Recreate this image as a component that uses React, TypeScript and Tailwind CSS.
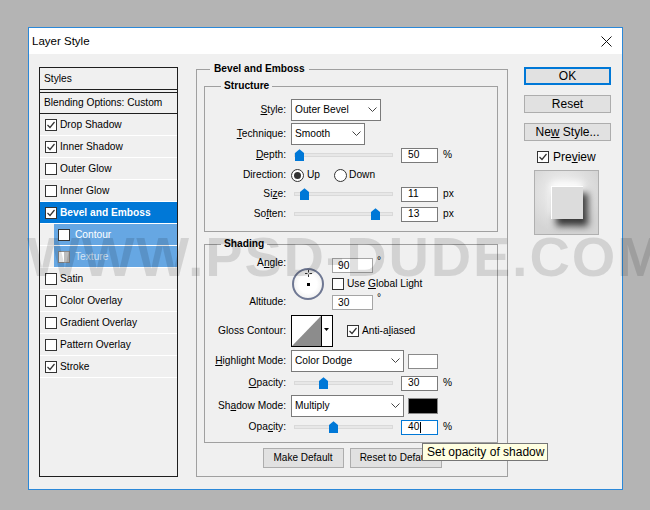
import React from "react";

type Row = { label: string; checked?: boolean; kind?: "sel" | "sub" | "dim" };

const rows: Row[] = [
  { label: "Drop Shadow", checked: true },
  { label: "Inner Shadow", checked: true },
  { label: "Outer Glow" },
  { label: "Inner Glow" },
  { label: "Bevel and Emboss", checked: true, kind: "sel" },
  { label: "Contour", kind: "sub" },
  { label: "Texture", kind: "dim" },
  { label: "Satin" },
  { label: "Color Overlay" },
  { label: "Gradient Overlay" },
  { label: "Pattern Overlay" },
  { label: "Stroke", checked: true },
];

const U = ({ children }: { children: React.ReactNode }) => (
  <span className="underline underline-offset-[1px]">{children}</span>
);

const Box = ({ checked, dim }: { checked?: boolean; dim?: boolean }) => (
  <span
    className={`flex h-[12px] w-[12px] shrink-0 items-center justify-center border ${
      dim ? "border-[#8a8a8a] bg-[linear-gradient(90deg,#ffffff_50%,#bdbdbd_50%)]" : "border-[#333] bg-white"
    }`}
  >
    {checked && (
      <svg width="10" height="10" viewBox="0 0 10 10">
        <path d="M1.5 5 L4 7.5 L8.5 2" fill="none" stroke="#333" strokeWidth="1.2" />
      </svg>
    )}
  </span>
);

const Label = ({ children }: { children: React.ReactNode }) => (
  <span className="w-[81px] shrink-0 text-right">{children}</span>
);

const Chevron = () => (
  <svg width="9" height="6" viewBox="0 0 9 6">
    <path d="M0.5 0.5 L4.5 4.5 L8.5 0.5" fill="none" stroke="#444" />
  </svg>
);

const Select = ({ value, w }: { value: string; w: string }) => (
  <div className={`ml-[5px] flex h-[22px] items-center justify-between border border-[#7a7a7a] bg-white pl-[3px] pr-[3px] ${w}`}>
    <span>{value}</span>
    <Chevron />
  </div>
);

const Slider = ({ pos }: { pos: number }) => (
  <div className="relative ml-[8px] h-[14px] w-[99px] shrink-0">
    <div className="absolute left-0 right-0 top-[5px] h-[4px] border border-[#d9d9d9] bg-[#e7e7e7]" />
    <svg className="absolute top-[1px]" style={{ left: pos - 4 }} width="9" height="12" viewBox="0 0 9 12">
      <path d="M0 4 L4.5 0.3 L9 4 V12 H0 Z" fill="#0078d7" />
    </svg>
  </div>
);

const Num = ({ v, focus }: { v: string; focus?: boolean }) => (
  <div
    className={`ml-[8px] flex h-[15px] w-[37px] shrink-0 items-center border bg-white pl-[6px] ${
      focus ? "border-[#0078d7]" : "border-[#7a7a7a]"
    }`}
  >
    {v}
    {focus && <span className="ml-[1px] h-[11px] w-px bg-black" />}
  </div>
);

const Radio = ({ on }: { on?: boolean }) => (
  <span className="flex h-[13px] w-[13px] shrink-0 items-center justify-center rounded-full border border-[#333] bg-white">
    {on && <span className="h-[7px] w-[7px] rounded-full bg-[#333]" />}
  </span>
);

const Btn = ({ children, w, ok }: { children: React.ReactNode; w?: string; ok?: boolean }) => (
  <div
    className={`flex h-[18px] items-center justify-center bg-[#e1e1e1] ${w ?? ""} ${
      ok ? "border-2 border-[#0078d7]" : "border border-[#adadad]"
    }`}
  >
    {children}
  </div>
);

export default function App() {
  return (
    <div className="relative h-[510px] w-[650px] overflow-hidden bg-[#b4b4b4] pl-[28px] pt-[27px] font-['Liberation_Sans',Arial,sans-serif] text-[10.2px] leading-[14px] text-black">
      <div className="flex h-[463px] w-[595px] flex-col border border-[#2b88d8] bg-[#f0f0f0]">
        {/* title bar */}
        <div className="flex h-[26px] shrink-0 items-center justify-between bg-white pl-[3px] pr-[10px]">
          <span className="text-[11.5px]">Layer Style</span>
          <svg width="11" height="11" viewBox="0 0 11 11">
            <path d="M0.5 0.5 L10.5 10.5 M10.5 0.5 L0.5 10.5" stroke="#111" strokeWidth="1" />
          </svg>
        </div>

        <div className="flex flex-1 items-start">
          {/* styles list */}
          <div className="ml-[10px] mt-[13px] flex h-[410px] w-[139px] shrink-0 flex-col border border-[#1e1e1e]">
            <div className="flex h-[22px] shrink-0 items-center border-b border-[#1e1e1e] pl-[4px]">Styles</div>
            <div className="mt-[2px] flex h-[22px] shrink-0 items-center border-y border-[#1e1e1e] pl-[4px]">
              Blending Options: Custom
            </div>
            {rows.map((r) =>
              r.kind === "sub" || r.kind === "dim" ? (
                <div key={r.label} className="flex h-[22px] shrink-0 border-b border-white pl-[14px]">
                  <div
                    className={`flex flex-1 items-center gap-[5px] bg-[#66a7e3] pl-[4px] ${
                      r.kind === "dim" ? "text-[#d3e3f3]" : "text-white"
                    }`}
                  >
                    <Box dim={r.kind === "dim"} />
                    {r.label}
                  </div>
                </div>
              ) : (
                <div
                  key={r.label}
                  className={`flex h-[22px] shrink-0 items-center gap-[3px] border-b border-white pl-[5px] ${
                    r.kind === "sel" ? "bg-[#0078d7] font-bold text-white" : ""
                  }`}
                >
                  <Box checked={r.checked} />
                  {r.label}
                </div>
              )
            )}
          </div>

          {/* bevel and emboss */}
          <fieldset className="ml-[18px] mt-[8px] h-[415px] w-[312px] shrink-0 border border-[#a0a0a0]">
            <legend className="ml-[13px] px-[4px] font-bold leading-[14px]">Bevel and Emboss</legend>

            <fieldset className="ml-[7px] mt-[3px] h-[153px] w-[294px] border border-[#a0a0a0]">
              <legend className="ml-[16px] px-[3px] font-bold leading-[14px]">Structure</legend>
              <div className="flex flex-col pt-[6px]">
                <div className="flex h-[22px] items-center">
                  <Label>
                    <U>S</U>tyle:
                  </Label>
                  <Select value="Outer Bevel" w="w-[90px]" />
                </div>
                <div className="mt-[2px] flex h-[22px] items-center">
                  <Label>
                    <U>T</U>echnique:
                  </Label>
                  <Select value="Smooth" w="w-[74px]" />
                </div>
                <div className="mt-[2px] flex h-[16px] items-center">
                  <Label>
                    <U>D</U>epth:
                  </Label>
                  <Slider pos={5} />
                  <Num v="50" />
                  <span className="ml-[5px]">%</span>
                </div>
                <div className="mt-[4px] flex h-[16px] items-center">
                  <Label>Direction:</Label>
                  <span className="ml-[5px]">
                    <Radio on />
                  </span>
                  <span className="ml-[3px]">Up</span>
                  <span className="ml-[14px]">
                    <Radio />
                  </span>
                  <span className="ml-[2px]">Down</span>
                </div>
                <div className="mt-[3px] flex h-[16px] items-center">
                  <Label>
                    Si<U>z</U>e:
                  </Label>
                  <Slider pos={10} />
                  <Num v="11" />
                  <span className="ml-[5px]">px</span>
                </div>
                <div className="mt-[4px] flex h-[16px] items-center">
                  <Label>
                    So<U>f</U>ten:
                  </Label>
                  <Slider pos={81} />
                  <Num v="13" />
                  <span className="ml-[5px]">px</span>
                </div>
              </div>
            </fieldset>

            <fieldset className="ml-[7px] mt-[5px] h-[206px] w-[294px] border border-[#a0a0a0]">
              <legend className="ml-[16px] px-[3px] font-bold leading-[14px]">Shading</legend>
              <div className="flex flex-col">
                <div className="mt-[4px] flex h-[56px]">
                  <div className="flex w-[81px] shrink-0 flex-col justify-between pb-[2px] pt-[1px] text-right">
                    <span>
                      A<U>n</U>gle:
                    </span>
                    <span>Altitude:</span>
                  </div>
                  <div className="relative ml-[6px] mt-[13px] h-[32px] w-[32px] shrink-0 rounded-full border-2 border-[#6f7893] bg-[radial-gradient(circle,#ffffff_45%,#e4e4e4)]">
                    <svg className="absolute left-[11px] top-[0px]" width="7" height="7" viewBox="0 0 7 7">
                      <path d="M0 3.5 H2.5 M4.5 3.5 H7 M3.5 0 V2.5 M3.5 4.5 V7" stroke="#333" strokeWidth="1" />
                    </svg>
                    <span className="absolute left-[13px] top-[13px] h-[3px] w-[3px] bg-black" />
                  </div>
                  <div className="ml-[8px] flex flex-col">
                    <div className="mt-[3px] flex h-[15px]">
                      <div className="flex h-[15px] w-[41px] items-center border border-[#a5a5a5] bg-white pl-[5px]">90</div>
                      <span className="ml-[4px] -mt-[3px] leading-[12px]">°</span>
                    </div>
                    <div className="mt-[5px] flex h-[12px] items-center gap-[3px]">
                      <Box />
                      <span>
                        Use <U>G</U>lobal Light
                      </span>
                    </div>
                    <div className="mt-[5px] flex h-[15px]">
                      <div className="flex h-[15px] w-[41px] items-center border border-[#a5a5a5] bg-white pl-[5px]">30</div>
                      <span className="ml-[4px] -mt-[3px] leading-[12px]">°</span>
                    </div>
                  </div>
                </div>

                <div className="mt-[4px] flex h-[32px] items-center">
                  <Label>Gloss Contour:</Label>
                  <svg className="ml-[5px] shrink-0" width="42" height="32" viewBox="0 0 42 32">
                    <rect x="0.5" y="0.5" width="41" height="31" fill="#ffffff" stroke="#000" />
                    <polygon points="1,31 30,1 30,31" fill="#8c8c8c" />
                    <line x1="30.5" y1="0" x2="30.5" y2="32" stroke="#000" />
                    <polygon points="33,13 38,13 35.5,16" fill="#000" />
                  </svg>
                  <span className="ml-[14px] flex items-center gap-[3px]">
                    <Box checked />
                    <span>
                      Anti-a<U>l</U>iased
                    </span>
                  </span>
                </div>

                <div className="mt-[3px] flex h-[22px] items-center">
                  <Label>
                    <U>H</U>ighlight Mode:
                  </Label>
                  <Select value="Color Dodge" w="w-[113px]" />
                  <span className="ml-[4px] h-[15px] w-[30px] border border-[#8a8a8a] bg-white" />
                </div>
                <div className="mt-[3px] flex h-[16px] items-center">
                  <Label>
                    <U>O</U>pacity:
                  </Label>
                  <Slider pos={29} />
                  <Num v="30" />
                  <span className="ml-[5px]">%</span>
                </div>
                <div className="mt-[4px] flex h-[22px] items-center">
                  <Label>
                    Sh<U>a</U>dow Mode:
                  </Label>
                  <Select value="Multiply" w="w-[113px]" />
                  <span className="ml-[4px] h-[16px] w-[30px] border border-[#8a8a8a] bg-black" />
                </div>
                <div className="mt-[2px] flex h-[16px] items-center">
                  <Label>
                    Opa<U>c</U>ity:
                  </Label>
                  <Slider pos={39} />
                  <Num v="40" focus />
                  <span className="ml-[5px]">%</span>
                </div>
              </div>
            </fieldset>

            <div className="mt-[5px] flex justify-center gap-[6px]">
              <div className="flex h-[20px] w-[81px] items-center justify-center border border-[#adadad] bg-[#e1e1e1] text-[10px]">
                Make Default
              </div>
              <div className="flex h-[20px] w-[92px] items-center justify-center border border-[#adadad] bg-[#e1e1e1] text-[10px]">
                Reset to Default
              </div>
            </div>
          </fieldset>

          {/* right column */}
          <div className="ml-[16px] mt-[13px] flex w-[87px] shrink-0 flex-col text-[12px]">
            <Btn ok>OK</Btn>
            <div className="mt-[10px]">
              <Btn>Reset</Btn>
            </div>
            <div className="mt-[10px]">
              <Btn>
                <span>
                  Ne<U>w</U> Style...
                </span>
              </Btn>
            </div>
            <div className="mt-[10px] flex h-[12px] items-center gap-[4px] pl-[13px]">
              <Box checked />
              <span>
                Pre<U>v</U>iew
              </span>
            </div>
            <div className="ml-[10px] mt-[7px] flex h-[65px] w-[65px] items-center justify-center border border-[#b0b0b0] bg-[radial-gradient(circle_at_45%_35%,#f4f4f4,#d4d4d4_75%)]">
              <div className="h-[33px] w-[32px] border-l border-t border-white bg-[#dcdcdc] shadow-[5px_7px_7px_rgba(0,0,0,0.75),0_-4px_7px_rgba(255,255,255,0.95)]" />
            </div>
          </div>
        </div>
      </div>

      {/* watermark */}
      <div className="pointer-events-none absolute left-[27px] top-[229px] whitespace-nowrap text-[56px] font-bold leading-none tracking-[1.8px] text-[rgba(0,0,0,0.12)]">
        WWW.PSD-DUDE.COM
      </div>

      {/* tooltip */}
      <div className="absolute left-[422px] top-[443px] flex h-[18px] w-[126px] items-center border border-[#767676] bg-[#ffffe1] pl-[4px] text-[12px]">
        Set opacity of shadow
      </div>
    </div>
  );
}
